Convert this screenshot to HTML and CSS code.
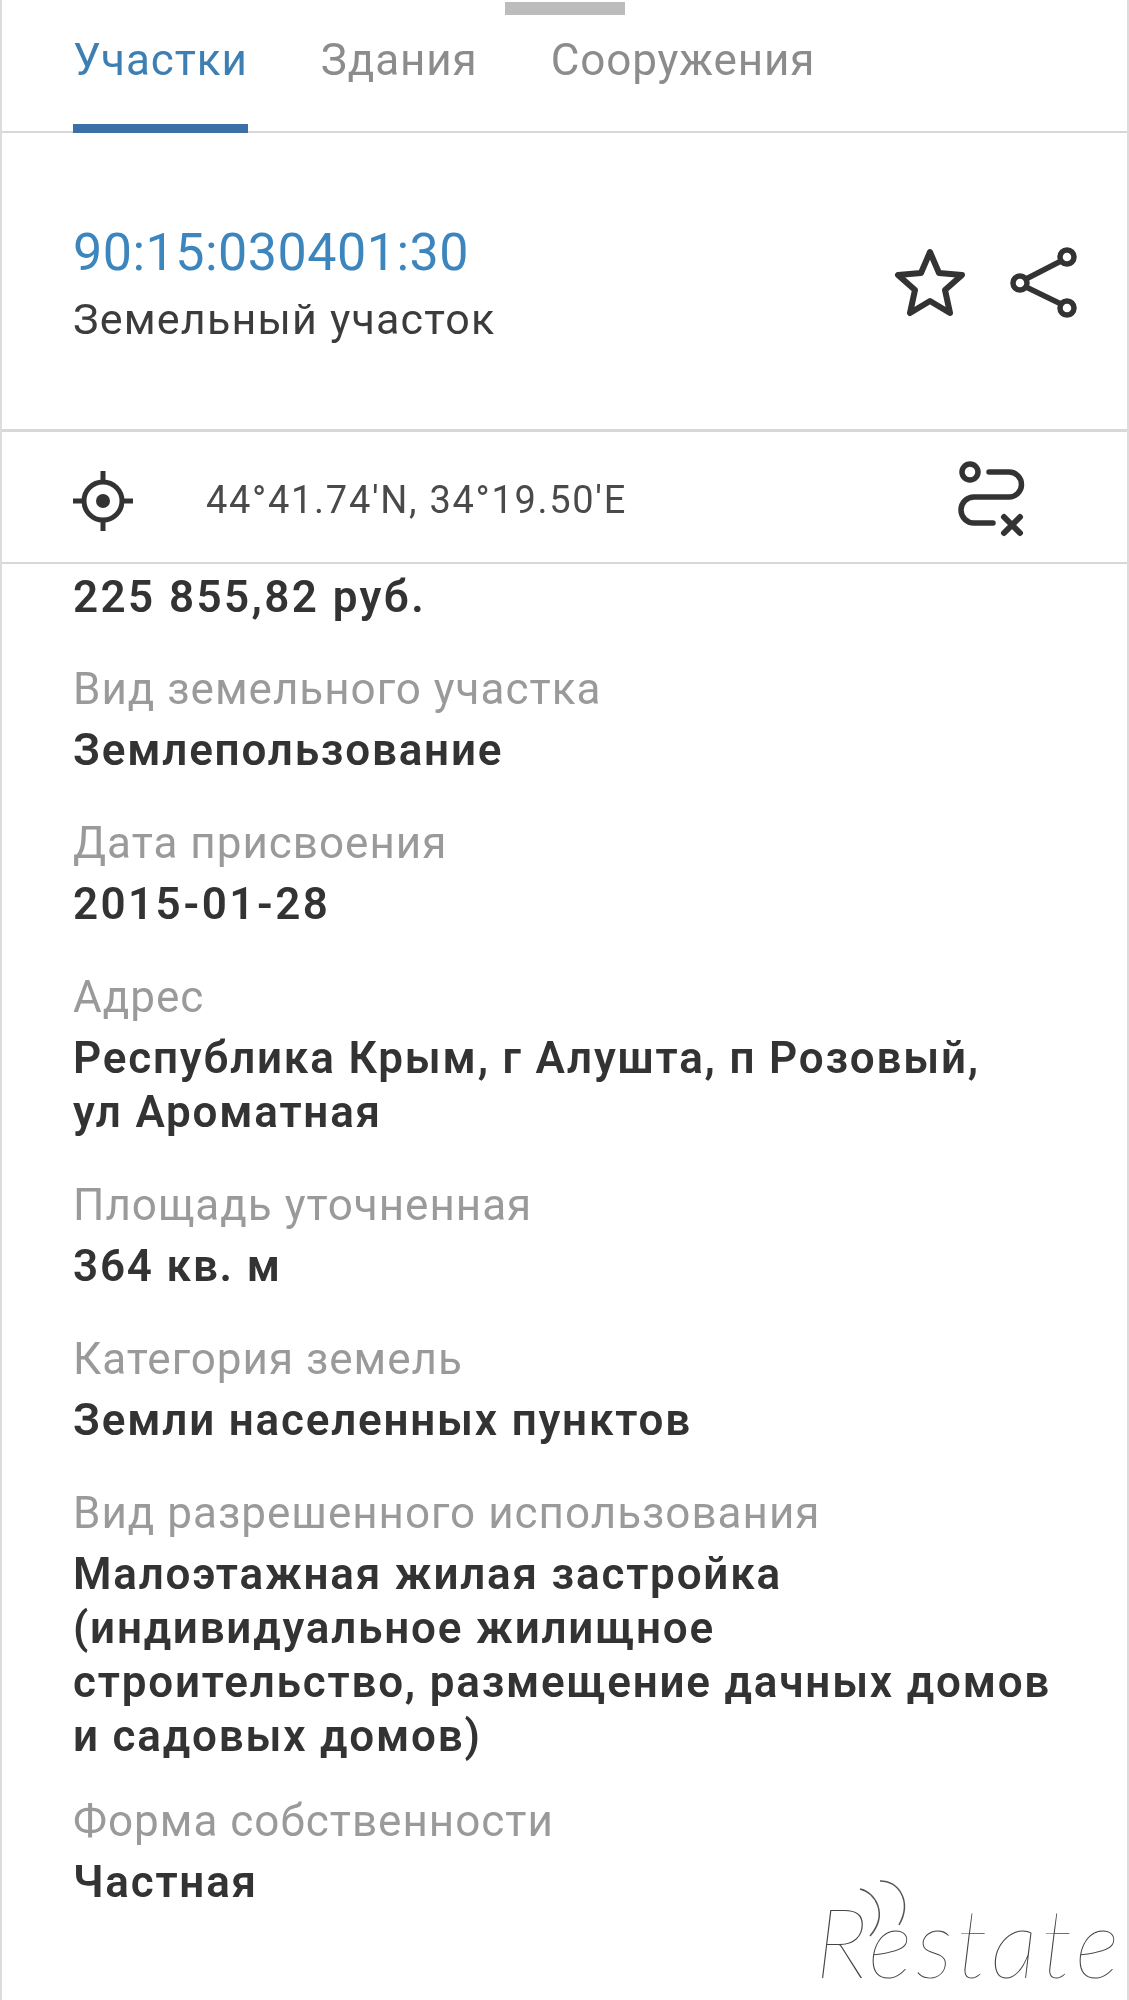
FILE: index.html
```html
<!DOCTYPE html>
<html lang="ru">
<head>
    <meta charset="UTF-8">
    <title>Участки</title>
    <link rel="stylesheet" href="styles.css">
</head>
<body>
    <div class="sheet">
        <div class="handle"></div>
        <nav class="tabs">
            <a class="tab active">Участки</a>
            <a class="tab">Здания</a>
            <a class="tab">Сооружения</a>
        </nav>
        <header class="summary">
            <div>
                <div class="cad-number">90:15:030401:30</div>
                <div class="cad-type">Земельный участок</div>
            </div>
            <div class="summary-actions">
                <svg class="icon-star" width="74" height="72" viewBox="0 0 74 72" fill="none" stroke="#333" stroke-width="6" stroke-linejoin="round">
                    <path d="M37 5 L46 26 L69 28 L52 43 L57 66 L37 54 L17 66 L22 43 L5 28 L28 26 Z"/>
                </svg>
                <svg class="icon-share" width="72" height="72" viewBox="0 0 72 72" fill="none" stroke="#333" stroke-width="5.5">
                    <circle cx="11" cy="36" r="7"/>
                    <circle cx="58" cy="10" r="7"/>
                    <circle cx="58" cy="61" r="7"/>
                    <path d="M17 32 L52 14 M17 40 L52 57"/>
                </svg>
            </div>
        </header>
        <div class="coords">
            <svg class="icon-target" width="60" height="60" viewBox="0 0 60 60" fill="none" stroke="#333" stroke-width="5">
                <circle cx="30" cy="30" r="19"/>
                <circle cx="30" cy="30" r="7" fill="#333" stroke="none"/>
                <path d="M30 0 V11 M30 49 V60 M0 30 H11 M49 30 H60"/>
            </svg>
            <span class="coords-text">44°41.74'N, 34°19.50'E</span>
            <svg class="icon-route" width="72" height="76" viewBox="0 0 72 76" fill="none" stroke="#333" stroke-width="5.5" stroke-linecap="round">
                <circle cx="14" cy="11" r="8"/>
                <path d="M33 11 H53 A12.500 12.500 0 0 1 53 36 H18 A12.500 12.500 0 0 0 18 62 H37"/>
                <path d="M48 56 L64 72 M64 56 L48 72" stroke-width="6"/>
            </svg>
        </div>
        <main class="details">
            <div class="price">225 855,82 руб.</div>
            <dl class="fields">
                <dt>Вид земельного участка</dt>
                <dd>Землепользование</dd>
                <dt>Дата присвоения</dt>
                <dd class="digits">2015-01-28</dd>
                <dt>Адрес</dt>
                <dd>Республика Крым, г Алушта, п Розовый,<br>ул Ароматная</dd>
                <dt>Площадь уточненная</dt>
                <dd>364 кв. м</dd>
                <dt>Категория земель</dt>
                <dd>Земли населенных пунктов</dd>
                <dt>Вид разрешенного использования</dt>
                <dd>Малоэтажная жилая застройка<br>(индивидуальное жилищное<br>строительство, размещение дачных домов<br>и садовых домов)</dd>
                <dt class="after-long">Форма собственности</dt>
                <dd>Частная</dd>
            </dl>
        </main>
    </div>
    <div class="watermark">
        <svg class="watermark-waves" width="60" height="70" viewBox="0 0 60 70" fill="none" stroke="#555" stroke-width="1.500">
            <path d="M1 13 C16 16 30 38 11 60"/>
            <path d="M21 5 C38 4 54 24 40 49"/>
        </svg>
        <span class="watermark-r">R</span><span class="watermark-rest">estate</span>
    </div>
</body>
</html>
```

FILE: styles.css
```css
html, body { margin: 0; height: 100%; }
body { background-color: #fff; font-family: "Roboto", "Noto Sans", sans-serif; color: #333; overflow: hidden; position: relative; }

.sheet { height: 2000px; box-sizing: border-box; border-left: 2px solid #dcdcdc; border-right: 2px solid #dcdcdc; position: relative; filter: blur(0.6px); }
.handle { position: absolute; top: 2px; left: 503px; width: 120px; height: 13px; background-color: #bcbcbc; }

.tabs { display: flex; height: 131px; padding: 0 0 0 71px; border-bottom: 2px solid #d8d8d8; }
.tab { font-size: 44px; letter-spacing: 0.9px; color: #8c8c8c; padding-top: 34px; margin-right: 73px; box-sizing: border-box; height: 133px; }
.tab.active { color: #3d7fb3; border-bottom: 9px solid #3b6fa5; }

.summary { display: flex; justify-content: space-between; align-items: center; height: 296px; padding: 0 46px 0 71px; border-bottom: 3px solid #d8d8d8; }
.cad-number { font-size: 52px; letter-spacing: 0.5px; color: #3d85bd; line-height: 60px; margin-top: 4px; }
.cad-type { font-size: 43px; letter-spacing: 1.2px; color: #3c3c3c; line-height: 50px; margin-top: 11px; }
.summary-actions { display: flex; align-items: center; gap: 42px; padding-top: 3px; }

.coords { display: flex; align-items: center; height: 130px; padding: 0 0 0 71px; border-bottom: 2px solid #d8d8d8; }
.coords-text { font-size: 38px; letter-spacing: 1.7px; color: #4a4a4a; margin-left: 73px; padding-top: 6px; }
.icon-target { margin-top: 8px; }
.icon-route { margin-left: auto; margin-right: 99px; margin-top: 4px; }

.details { padding: 10px 0 0 71px; }
.price { font-size: 44px; font-weight: 600; letter-spacing: 2.4px; line-height: 46px; padding-bottom: 3px; color: #333; }
.fields { margin: 0; }
.fields dt { font-size: 44px; letter-spacing: 1px; color: #9a9a9a; line-height: 46px; margin-top: 43px; }
.fields dt.after-long { margin-top: 35px; }
.fields dd { margin: 11px 0 0; font-size: 44px; font-weight: 600; letter-spacing: 1.8px; line-height: 54px; color: #333; }
.fields dd.digits { letter-spacing: 2.4px; }

.watermark { position: absolute; left: 815px; top: 1885px; font-family: "Lato", sans-serif; font-style: italic; font-weight: 100; font-size: 96px; letter-spacing: 3.5px; line-height: 112px; color: #444; white-space: nowrap; }
.watermark-waves { position: absolute; left: 44px; top: -9px; }
```
